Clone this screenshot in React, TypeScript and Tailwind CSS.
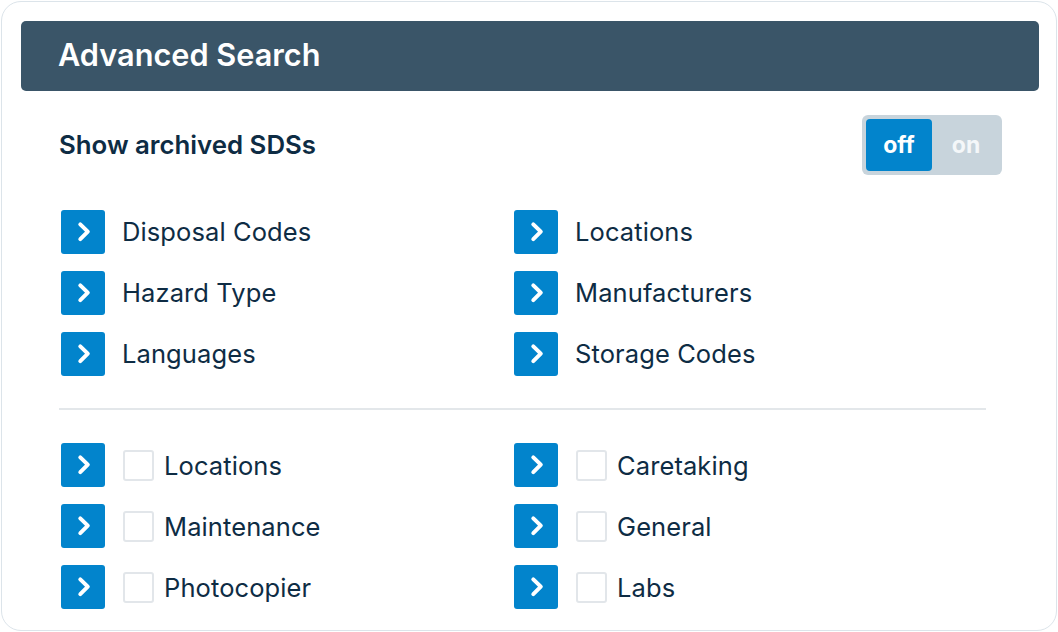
import React from "react";

const topLeft = ["Disposal Codes", "Hazard Type", "Languages"];
const topRight = ["Locations", "Manufacturers", "Storage Codes"];
const bottomLeft = ["Locations", "Maintenance", "Photocopier"];
const bottomRight = ["Caretaking", "General", "Labs"];

function Expander() {
  return (
    <button className="flex h-[44px] w-[44px] shrink-0 items-center justify-center rounded-[3px] bg-[#0284cc]">
      <svg width="44" height="44" viewBox="0 0 44 44" fill="none">
        <path d="M19.3 14.3 L26.8 21.7 L19.3 29.1" stroke="white" strokeWidth="4" strokeLinecap="round" strokeLinejoin="round" />
      </svg>
    </button>
  );
}

function Row({ label, checkbox }: { label: string; checkbox?: boolean }) {
  return (
    <div className="flex h-[44px] items-center">
      <Expander />
      {checkbox && <span className="ml-[18px] h-[31px] w-[31px] rounded-[3px] border-2 border-[#e2e6ea] bg-white" />}
      <span className={(checkbox ? "ml-[10px] pt-[1px]" : "ml-[17px] pb-[1px]") + " text-[25.5px] leading-none tracking-[0.1px] text-[#0e2c44]"}>{label}</span>
    </div>
  );
}

function Column({ items, checkbox }: { items: string[]; checkbox?: boolean }) {
  return (
    <div className="flex flex-col gap-[17px]">
      {items.map((item) => (
        <Row key={item} label={item} checkbox={checkbox} />
      ))}
    </div>
  );
}

export default function App() {
  return (
    <div className="h-[632px] w-[1058px] bg-white p-px font-['Inter',sans-serif]">
      <div className="h-[630px] w-[1056px] rounded-[20px] border border-[#dce4ea] bg-white p-[19px]">
        <div className="flex h-[70px] w-[1018px] items-center rounded-[5px] bg-[#3a5568] pl-[37px]">
          <h1 className="pb-[1px] text-[30.7px] font-semibold leading-none text-white">Advanced Search</h1>
        </div>

        <div className="mt-[24px] flex h-[60px] w-[981px] items-center justify-between pl-[38px]">
          <span className="text-[25.8px] font-semibold leading-none text-[#0e2c44]">Show archived SDSs</span>
          <div className="flex h-[60px] w-[140px] rounded-[6px] bg-[#c8d4dc] p-1">
            <span className="flex h-[52px] w-[66px] items-center justify-center rounded-[4px] bg-[#0284cc] text-[23px] font-bold text-white">off</span>
            <span className="flex h-[52px] flex-1 items-center justify-center pl-[2px] text-[23px] font-bold text-[#f4f7f9]">on</span>
          </div>
        </div>

        <div className="mt-[35px] grid grid-cols-[453px_1fr] pl-[40px]">
          <Column items={topLeft} />
          <Column items={topRight} />
        </div>

        <div className="ml-[38px] mt-[32px] h-[2px] w-[927px] bg-[#e3e7ea]" />

        <div className="mt-[33px] grid grid-cols-[453px_1fr] pl-[40px]">
          <Column items={bottomLeft} checkbox />
          <Column items={bottomRight} checkbox />
        </div>
      </div>
    </div>
  );
}
